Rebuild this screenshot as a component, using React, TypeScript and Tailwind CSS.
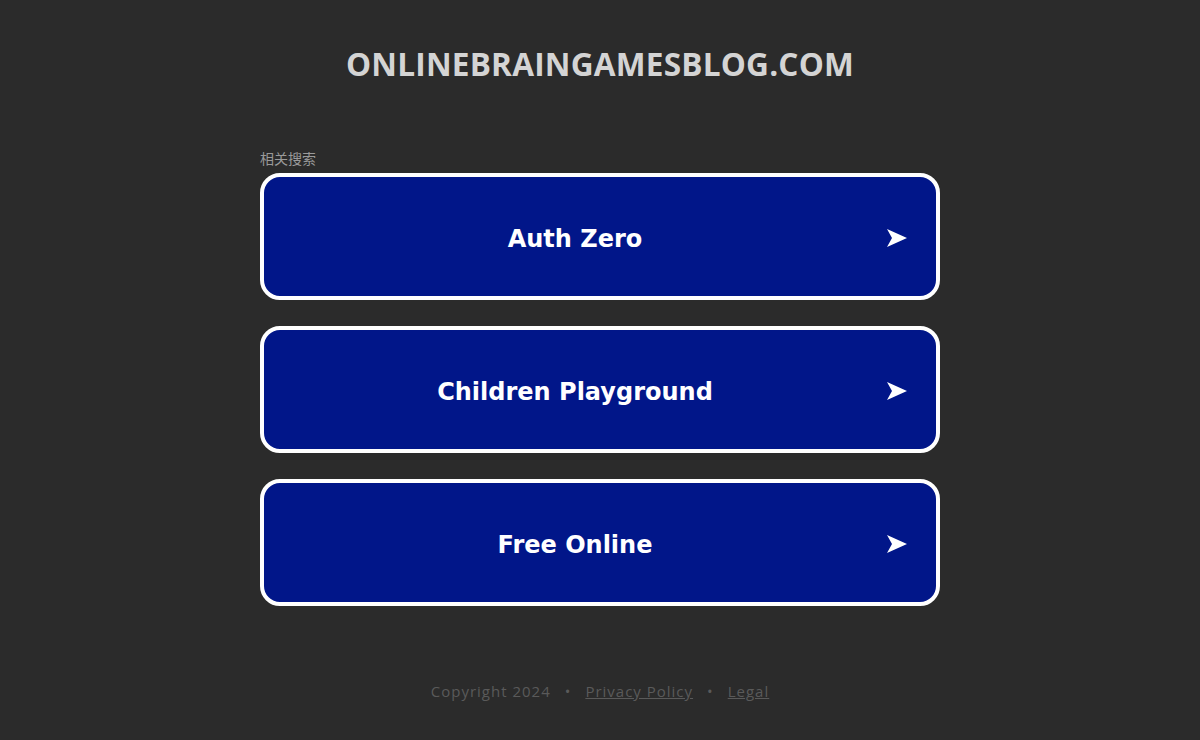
import React from 'react';

const LINKS = ['Auth Zero', 'Children Playground', 'Free Online'];

function Arrow() {
  return (
    <svg width="22" height="20" viewBox="0 0 22 20" className="shrink-0 mt-[2px]">
      <path d="M1 1 L21 10 L1 19 L6 10 Z" fill="#ffffff" />
    </svg>
  );
}

export default function App() {
  return (
    <div className="min-h-[740px] w-full bg-[#2b2b2b] flex flex-col items-center">
      <h1
        className="mt-[44px] text-[31.6px] leading-[40px] font-bold text-[#d4d4d4] tracking-[0.2px]"
        style={{ fontFamily: '"Open Sans", sans-serif' }}
      >
        ONLINEBRAINGAMESBLOG.COM
      </h1>

      <div className="mt-[65px] w-[680px]">
        <div
          className="text-[14px] leading-[18px] text-[#9a9a9a] mb-[6px]"
          style={{ fontFamily: '"Noto Sans CJK SC", sans-serif' }}
        >
          相关搜索
        </div>
        <div className="flex flex-col gap-[26px]">
          {LINKS.map((label) => (
            <a
              key={label}
              href="#"
              className="h-[127px] rounded-[20px] border-4 border-white bg-[#011689] flex items-center pl-[28px] pr-[28px]"
            >
              <span
                className="flex-1 text-center text-white font-bold text-[24px] mr-[28px] pt-[4px]"
                style={{ fontFamily: 'Tahoma, "DejaVu Sans", Verdana, sans-serif' }}
              >
                {label}
              </span>
              <Arrow />
            </a>
          ))}
        </div>
      </div>

      <div
        className="mt-[75px] text-[15px] leading-[20px] tracking-[1px] text-[#5a5a5a] flex items-center gap-[14px]"
        style={{ fontFamily: '"Open Sans", sans-serif' }}
      >
        <span>Copyright 2024</span>
        <span>•</span>
        <a href="#" className="underline">Privacy Policy</a>
        <span>•</span>
        <a href="#" className="underline">Legal</a>
      </div>
    </div>
  );
}
